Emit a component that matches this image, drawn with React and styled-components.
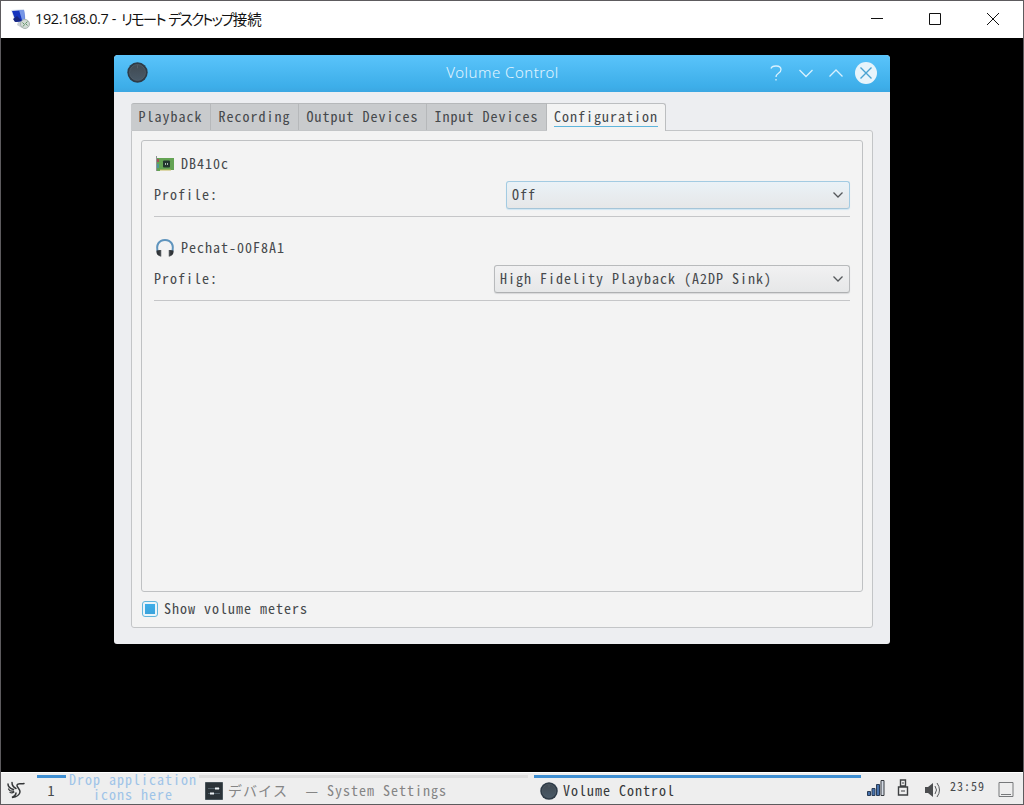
import React, { useState } from "react";
import styled, { createGlobalStyle } from "styled-components";

const GlobalStyle = createGlobalStyle`
  * {
    box-sizing: border-box;
  }
  body {
    margin: 0;
    background: #000;
    overflow: hidden;
  }
  button {
    margin: 0;
    padding: 0;
    border: 0;
    background: none;
    font: inherit;
    letter-spacing: inherit;
    color: inherit;
  }
`;

const RemoteWindow = styled.div`
  display: flex;
  flex-direction: column;
  width: 1024px;
  height: 805px;
  border: 1px solid #5d5b5e;
  background: #000;
  font-family: "Noto Sans Mono CJK JP", "DejaVu Sans Mono", "Noto Sans CJK JP", monospace;
  font-size: 14px;
  letter-spacing: 1px;
  line-height: 20px;
  color: #46494c;
  white-space: pre;
`;

const RemoteBar = styled.header`
  display: flex;
  align-items: center;
  flex: 0 0 37px;
  padding: 0 1px 2px 9px;
  background: #fff;
`;

const RemoteTitle = styled.h1`
  display: flex;
  flex: 1;
  margin: 0 0 0 4px;
  font: 400 14.4px/20px "Open Sans", "Noto Sans CJK JP", sans-serif;
  color: #111;
`;

const Address = styled.span`
  width: 86px;
  letter-spacing: -0.35px;
`;

const Kana = styled.span`
  font-family: "Noto Sans CJK JP", sans-serif;
  font-feature-settings: "palt";
  letter-spacing: -1.75px;
  word-spacing: 2px;
`;

const Kanji = styled.span`
  font-family: "Noto Sans CJK JP", sans-serif;
  font-size: 14.5px;
  letter-spacing: 0;
`;

const RemoteButton = styled.button`
  display: grid;
  place-items: center;
  width: 58px;
  height: 35px;
`;

const Desktop = styled.main`
  flex: 1;
  padding: 17px 0 0 113px;
`;

const Dialog = styled.section`
  display: flex;
  flex-direction: column;
  width: 776px;
  height: 589px;
  border-radius: 4px 4px 3px 3px;
  overflow: hidden;
  background: #edeef1;
`;

const DialogBar = styled.div`
  display: grid;
  grid-template-columns: 120px 1fr 120px;
  align-items: center;
  height: 37px;
  flex: none;
  padding: 0 12px 2px 13px;
  background: linear-gradient(#5ac4fb, #3daee9 85%, #3ca7e2);
`;

const DialogTitle = styled.h2`
  margin: 0;
  padding-bottom: 2px;
  text-align: center;
  font: 300 15px/20px "Noto Sans", sans-serif;
  letter-spacing: 0.5px;
  color: #e2f5ff;
`;

const DialogButtons = styled.div`
  display: flex;
  justify-content: flex-end;
  gap: 6px;
`;

const DialogBody = styled.div`
  display: flex;
  flex-direction: column;
  flex: 1;
  padding: 11px 17px 16px;
`;

const Tabs = styled.nav`
  display: flex;
  height: 28px;
  margin-bottom: -1px;
  z-index: 1;
`;

const Tab = styled.button`
  display: flex;
  align-items: flex-start;
  width: ${(p) => p.$width}px;
  height: ${(p) => (p.$active ? 28 : 27)}px;
  padding: 3px 0 0 ${(p) => (p.$active ? 7 : 7.5)}px;
  background: ${(p) => (p.$active ? "#f3f3f3" : "#c9cbcd")};
  border: solid ${(p) => (p.$active ? "#bcbec0" : "#b6b8ba")};
  border-width: 1px 1px 0 0;
  border-radius: ${(p) => (p.$first ? "3px 0 0 0" : p.$active ? "0 3px 0 0" : "0")};
`;

const TabText = styled.span`
  height: 20px;
  border-bottom: ${(p) => (p.$active ? "1px solid #5eb5dc" : "none")};
  line-height: 19px;
`;

const Panel = styled.div`
  display: flex;
  flex-direction: column;
  height: 498px;
  padding: 9px 9px 0;
  border: 1px solid #c3c5c7;
  border-radius: 0 3px 3px 3px;
  background: #f3f3f3;
`;

const Frame = styled.div`
  flex: 0 0 452px;
  padding: 0 12px;
  border: 1px solid #bfc1c3;
  border-radius: 3px;
`;

const Device = styled.article`
  display: flex;
  flex-direction: column;
  height: ${(p) => p.$height}px;
  padding-top: ${(p) => p.$top}px;
  border-bottom: 1px solid #c5c6c8;
`;

const DeviceName = styled.div`
  display: flex;
  align-items: center;
  gap: 6px;
  height: 22px;
  padding-left: 1px;
`;

const Profile = styled.div`
  display: flex;
  align-items: center;
  justify-content: space-between;
  height: 28px;
  margin-top: 6px;
`;

const Combo = styled.button`
  display: flex;
  align-items: center;
  justify-content: space-between;
  width: ${(p) => p.$width}px;
  height: 28px;
  padding: 0 5px;
  border: 1px solid ${(p) => (p.$focused ? "#a3cbe2" : "#b8babc")};
  border-bottom-color: ${(p) => (p.$focused ? "#a5c5d8" : "#aeb0b2")};
  border-radius: 3px;
  background: linear-gradient(${(p) => (p.$focused ? "#eaf2f7" : "#f1f1f2")}, #e6e7e8);
  box-shadow: 0 1px 1px ${(p) => (p.$focused ? "#cfe6f3" : "#d7d8d9")};
`;

const Label = styled.span`
  padding-bottom: 3px;
`;

const Meters = styled.label`
  display: flex;
  align-items: center;
  gap: 6px;
  margin-top: 6px;
  padding-left: 1px;
`;

const CheckBox = styled.input`
  appearance: none;
  width: 16px;
  height: 16px;
  margin: 0 0 1px;
  border: 1px solid #62b6dc;
  border-radius: 3px;
  background: #eaf5fa;

  &:checked {
    background: linear-gradient(#3daee9, #3ca3db) center / 10px 10px no-repeat #eaf5fa;
  }
`;

const TaskBar = styled.footer`
  display: flex;
  flex: 0 0 32px;
  padding-top: 2px;
  border-top: 1px solid #fff;
  background: #eeeeee;
`;

const Launcher = styled.button`
  width: 36px;
  height: 29px;
  padding: 4px 0 0 5px;
  text-align: left;
`;

const Pager = styled.button`
  width: 29px;
  padding-bottom: 3px;
  border-top: 3px solid #3f8fd2;
`;

const DropHint = styled.div`
  width: 133px;
  margin-top: -3px;
  padding-left: 1px;
  text-align: center;
  line-height: 15px;
  color: #9fc4e8;
`;

const Task = styled.button`
  display: flex;
  align-items: center;
  gap: 5px;
  width: ${(p) => p.$width}px;
  margin-right: ${(p) => p.$gap}px;
  padding: 0 0 1px 6px;
  border-top: 3px solid ${(p) => (p.$active ? "#3f8fd2" : "#dedede")};
  color: ${(p) => (p.$active ? "#37393b" : "#858585")};
`;

const TaskText = styled.span`
  padding-bottom: 2px;
`;

const AppName = styled.span`
  margin-left: 1.5px;
`;

const Tray = styled.div`
  display: flex;
  align-items: flex-start;
`;

const TrayIcon = styled.svg`
  display: block;
  margin: ${(p) => p.$top}px ${(p) => p.$right}px 0 0;
`;

const Clock = styled.time`
  width: 48px;
  margin-top: 1px;
  font-size: 12px;
`;

const ComputerIcon = () => (
  <svg width="21" height="20" viewBox="0 0 21 20">
    <path d="M8 13l7-1 4 4-7 3-5-3z" fill="#c8ced5" />
    <path d="M1 1l13-1 2 12-11 1z" fill="#dce4ef" />
    <path d="M2 2l12-1 1 11-9 1z" fill="#1635be" />
    <path d="M9 1l5 0 1 10-3 0z" fill="#7696e6" />
    <path d="M3 10l4-3 5 5-7 1z" fill="#17267f" />
    <circle cx="15" cy="15" r="4.500" fill="#d2dad5" stroke="#a9b3af" />
    <path d="M12.500 13.500l2 2-1.500 2M17.500 12.500l-2 2 2 2" stroke="#65966a" fill="none" />
  </svg>
);

const KnobIcon = ({ size }) => (
  <svg width={size} height={size} viewBox="0 0 20 20">
    <defs>
      <linearGradient id="knob" x2="0" y2="1">
        <stop stopColor="#414a52" />
        <stop offset="1" stopColor="#485967" />
      </linearGradient>
    </defs>
    <circle cx="10" cy="10" r="9.7" fill="#2e3b47" />
    <circle cx="10" cy="10" r="7.6" fill="url(#knob)" stroke="#56616a" strokeWidth=".7" />
    <path d="M10 3v3" stroke="#56616a" strokeWidth=".8" />
  </svg>
);

const CardIcon = () => (
  <svg width="20" height="16" viewBox="0 0 20 16">
    <path d="M1.500 0v15" stroke="#8c9394" />
    <path d="M2 2h17v12H5v1H2z" fill="#64a353" />
    <path d="M5 13.500h11v1H5z" fill="#c5ba61" />
    <path d="M2 3h2v3H2z" fill="#a6525a" />
    <path d="M2 8h2v4H2z" fill="#4b9a9a" />
    <rect x="8" y="4.500" width="7" height="7" rx="1" fill="#22362e" />
    <path d="M10 8h1m1 0h1" stroke="#d8e2dd" strokeWidth="1.500" />
  </svg>
);

const HeadphonesIcon = () => (
  <svg width="20" height="20" viewBox="0 0 20 20" fill="none">
    <path d="M3 14C.5 7 4 2 10 2s9.500 5 7 12" stroke="#5f94bd" strokeWidth="2" />
    <path d="M5 12v6c-2 0-4-2-3.500-5.500zM15 12v6c2 0 4-2 3.500-5.500z" fill="#303438" />
    <path d="M5.500 12v6.500M14.500 12v6.500" stroke="#4d5256" strokeWidth="1.500" />
  </svg>
);

const Chevron = ({ up, large, color }) => (
  <svg width={large ? 24 : 12} height={large ? 24 : 12} viewBox={large ? "0 0 24 24" : "0 0 12 12"} fill="none">
    <path
      d={large ? (up ? "M5.500 15.500l6.500-6.500 6.500 6.500" : "M5.500 9l6.500 6.500L18.500 9") : "M1.500 3.500L6 8l4.500-4.500"}
      stroke={color}
      strokeWidth="1.300"
    />
  </svg>
);

const HelpIcon = () => (
  <svg width="24" height="24" viewBox="0 0 24 24" fill="none" stroke="#d8f1fe" strokeWidth="1.300">
    <path d="M7 7.500C8 4 17 4 17 8.500c0 4-5 3.500-5 7.500" />
    <path d="M12 18v1.500" />
  </svg>
);

const CloseIcon = () => (
  <svg width="24" height="24" viewBox="0 0 24 24">
    <circle cx="12" cy="12" r="11" fill="#e7f4fb" />
    <path d="M6.500 6.500l11 11m0-11l-11 11" stroke="#4aa3d2" strokeWidth="1.400" />
  </svg>
);

const BirdIcon = () => (
  <svg width="20" height="20" viewBox="0 0 20 20" fill="none" stroke="#343638" strokeLinecap="round">
    <path d="M2 4c0 3 2 4.500 5.500 5.500M6 2.500c0 3 1 4.500 4 6" strokeWidth="1.500" />
    <path d="M2.500 9c1 2 3 2.500 5 2M4 12.500c2 .8 3 .3 4-.5" strokeWidth="1.200" />
    <path d="M18 3.500c-3 1-6-1-7 1.500-.8 2 3.500 4 3 7-.5 3.500-4 5-8 5.500 3-1.500 4-2.500 4-4.500" strokeWidth="1.500" />
  </svg>
);

const SettingsIcon = () => (
  <svg width="18" height="18" viewBox="0 0 18 18">
    <path d="M.5.5h17v17H.5z" fill="#2b3338" stroke="#49545a" />
    <path d="M3 6.500h12M3 11.500h12" stroke="#526069" />
    <path d="M10 6.500h4M5 11.500h4" stroke="#edf2f4" strokeWidth="2" />
  </svg>
);

const tabs = [
  ["Playback", 80],
  ["Recording", 88],
  ["Output Devices", 128],
  ["Input Devices", 120],
  ["Configuration", 119],
];

function App() {
  const [active, setActive] = useState("Configuration");
  const [meters, setMeters] = useState(true);

  return (
    <>
      <GlobalStyle />
      <RemoteWindow>
        <RemoteBar>
          <ComputerIcon />
          <RemoteTitle>
            <Address>192.168.0.7 - </Address>
            <Kana>リモート デスクトップ</Kana>
            <Kanji>接続</Kanji>
          </RemoteTitle>
          <RemoteButton aria-label="Minimize">
            <svg width="12" height="12"><path d="M0 5.500h12" stroke="#111" /></svg>
          </RemoteButton>
          <RemoteButton aria-label="Maximize">
            <svg width="12" height="12"><path d="M.5.5h11v11H.5z" stroke="#111" fill="none" /></svg>
          </RemoteButton>
          <RemoteButton aria-label="Close">
            <svg width="12" height="12"><path d="M0 0l12 12M12 0L0 12" stroke="#111" /></svg>
          </RemoteButton>
        </RemoteBar>
        <Desktop>
          <Dialog>
            <DialogBar>
              <KnobIcon size={21} />
              <DialogTitle>Volume Control</DialogTitle>
              <DialogButtons>
                <HelpIcon />
                <Chevron large color="#d8f1fe" />
                <Chevron large up color="#d8f1fe" />
                <CloseIcon />
              </DialogButtons>
            </DialogBar>
            <DialogBody>
              <Tabs>
                {tabs.map(([name, width], i) => (
                  <Tab key={name} $width={width} $first={i === 0} $active={name === active} onClick={() => setActive(name)}>
                    <TabText $active={name === active}>{name}</TabText>
                  </Tab>
                ))}
              </Tabs>
              <Panel>
                <Frame>
                  <Device $height={76} $top={12}>
                    <DeviceName><CardIcon /><Label>DB410c</Label></DeviceName>
                    <Profile>
                      <Label>Profile:</Label>
                      <Combo $width={344} $focused><Label>Off</Label><Chevron color="#55585b" /></Combo>
                    </Profile>
                  </Device>
                  <Device $height={84} $top={20}>
                    <DeviceName><HeadphonesIcon /><Label>Pechat-00F8A1</Label></DeviceName>
                    <Profile>
                      <Label>Profile:</Label>
                      <Combo $width={356}><Label>High Fidelity Playback (A2DP Sink)</Label><Chevron color="#55585b" /></Combo>
                    </Profile>
                  </Device>
                </Frame>
                <Meters>
                  <CheckBox type="checkbox" checked={meters} onChange={() => setMeters(!meters)} />
                  <Label>Show volume meters</Label>
                </Meters>
              </Panel>
            </DialogBody>
          </Dialog>
        </Desktop>
        <TaskBar>
          <Launcher aria-label="Menu"><BirdIcon /></Launcher>
          <Pager>1</Pager>
          <DropHint>{"Drop application\nicons here"}</DropHint>
          <Task $width={329} $gap={6}>
            <SettingsIcon />
            <TaskText>デバイス  <AppName>— System Settings</AppName></TaskText>
          </Task>
          <Task $width={327} $gap={6} $active>
            <KnobIcon size={18} />
            <TaskText>Volume Control</TaskText>
          </Task>
          <Tray>
            <TrayIcon $top={4} $right={12} width="18" height="18" viewBox="0 0 18 18">
              <path d="M.5 12.500h3v4h-3zM5 9.500h3v7H5zM9.500 5.500h3v11h-3z" fill="#4772ad" stroke="#2b3d56" />
              <path d="M14 1.500h3v15h-3z" fill="#d4dbe4" stroke="#34383e" />
            </TrayIcon>
            <TrayIcon $top={4} $right={16} width="12" height="18" viewBox="0 0 12 18" fill="none" stroke="#3e4042">
              <path d="M3.500 1h5v6h-5zM1.500 8h9v8h-9z" strokeWidth="1.400" />
              <path d="M5 4h2M4 12h4" />
            </TrayIcon>
            <TrayIcon $top={7} $right={9} width="16" height="16" viewBox="0 0 16 16" fill="none" stroke="#57595b">
              <path d="M0 5h3l5-4v14l-5-4H0z" fill="#4b4d4f" stroke="none" />
              <path d="M10 4q3 4 0 8M12 1q5 7 0 14" />
            </TrayIcon>
            <Clock>23:59</Clock>
            <TrayIcon $top={7} $right={0} width="16" height="16" viewBox="0 0 16 16" fill="none" stroke="#77797b">
              <path d="M1 .5h14v14H1zM3 12.500h10" />
            </TrayIcon>
          </Tray>
        </TaskBar>
      </RemoteWindow>
    </>
  );
}

export default App;
